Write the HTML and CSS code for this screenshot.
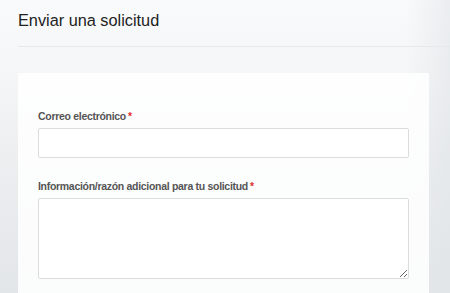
FILE: index.html
```html
<!DOCTYPE html>
<html lang="es">
<head>
    <meta charset="UTF-8">
    <meta name="viewport" content="width=device-width, initial-scale=1.0">
    <title>Enviar una solicitud</title>
    <link rel="stylesheet" href="styles.css">
</head>
<body>
    <header class="page-header">
        <h1>Enviar una solicitud</h1>
    </header>

    <section class="request-card">
        <form class="request-form">
            <div class="field">
                <label for="email">Correo electrónico<span class="required">*</span></label>
                <input type="email" id="email">
            </div>
            <div class="field">
                <label for="reason">Información/razón adicional para tu solicitud<span class="required">*</span></label>
                <textarea id="reason"></textarea>
            </div>
        </form>
    </section>
</body>
</html>
```

FILE: styles.css
```css
body {
    margin: 0;
    height: 293px;
    overflow: hidden;
    font-family: "Liberation Sans", Arial, sans-serif;
    color: #222;
    background:
        linear-gradient(90deg, rgba(255, 255, 255, 0) 0%, rgba(255, 255, 255, 0) 90%, rgba(225, 229, 232, 0.6) 100%),
        linear-gradient(180deg, #f9fafb 0%, #f5f6f7 25%, #eceef0 55%, #e3e6e8 100%);
}

.page-header {
    margin-left: 18px;
    height: 46px;
    border-bottom: 1px solid #e6e8ea;
}

.page-header h1 {
    margin: 0;
    padding-top: 9px;
    font-size: 16.3px;
    font-weight: normal;
    line-height: 22px;
    color: #222;
}

.request-card {
    margin: 26px 0 0 18px;
    width: 371px;
    height: 185px;
    padding: 35px 20px 0;
    background: rgba(255, 255, 255, 0.86);
}

.field {
    margin-bottom: 20px;
}

.field label {
    display: block;
    margin-bottom: 4px;
    font-size: 10.5px;
    font-weight: bold;
    letter-spacing: -0.3px;
    line-height: 16px;
    color: #555;
}

.required {
    color: #e03131;
    margin-left: 2px;
}

.field input,
.field textarea {
    display: block;
    box-sizing: border-box;
    width: 100%;
    border: 1px solid #dcdcdc;
    border-radius: 2px;
    background: #fff;
    font-family: inherit;
    font-size: 12px;
}

.field input {
    height: 30px;
}

.field textarea {
    height: 81px;
    resize: vertical;
}
```
